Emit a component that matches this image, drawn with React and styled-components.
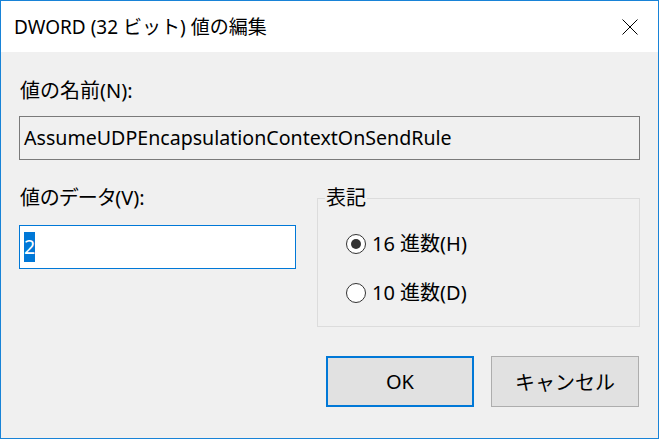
import React, { useState } from "react";
import styled, { createGlobalStyle } from "styled-components";

const GlobalStyle = createGlobalStyle`
  html, body {
    margin: 0;
    padding: 0;
    background: #ffffff;
  }
  * {
    box-sizing: border-box;
  }
`;

const Window = styled.div`
  width: 659px;
  height: 439px;
  border: 1px solid #1883d7;
  background-color: #f0f0f0;
  font-family: "Noto Sans", "Noto Sans CJK JP", sans-serif;
  font-size: 20px;
  color: #000000;
  display: flex;
  flex-direction: column;
`;

const TitleBar = styled.div`
  height: 51px;
  flex: none;
  background-color: #ffffff;
  display: flex;
  align-items: center;
  justify-content: space-between;
  padding: 0 20px 0 13px;
`;

const Title = styled.span`
  font-size: 19px;
  line-height: 24px;
`;

const CloseButton = styled.button`
  width: 16px;
  height: 16px;
  padding: 0;
  border: none;
  background: none;
  display: flex;
  cursor: pointer;
`;

const Body = styled.div`
  flex: 1;
  padding: 27px 18px 0 18px;
  display: flex;
  flex-direction: column;
`;

const Label = styled.div`
  line-height: 24px;
  padding-left: 1px;
  margin-bottom: ${({ $gap }) => $gap}px;
  font-feature-settings: ${({ $proportional }) => ($proportional ? '"palt"' : "normal")};
`;

const TextBox = styled.div`
  height: 44px;
  border: 1px solid ${({ $focused }) => ($focused ? "#0078d7" : "#7a7a7a")};
  background-color: ${({ $readOnly }) => ($readOnly ? "#f0f0f0" : "#ffffff")};
  display: flex;
  align-items: center;
  padding: 0 4px;
  font-size: 19.6px;
  line-height: 24px;
`;

const Selected = styled.span`
  background-color: #0078d7;
  color: #ffffff;
  padding: 3px 0;
  line-height: 24px;
`;

const Row = styled.div`
  display: flex;
  gap: 21px;
  margin-top: 26px;
`;

const LeftColumn = styled.div`
  width: 277px;
  display: flex;
  flex-direction: column;
`;

const GroupBox = styled.fieldset`
  flex: 1;
  margin: 0;
  height: 141px;
  border: 1px solid #dcdcdc;
  padding: 0 0 0 28px;
  display: flex;
  flex-direction: column;
  gap: 25px;
`;

const Legend = styled.legend`
  padding: 0 1px;
  margin-left: -21px;
  line-height: 24px;
`;

const RadioRow = styled.label`
  display: flex;
  align-items: center;
  gap: 6px;
  line-height: 24px;
  cursor: pointer;
  margin-top: ${({ $first }) => ($first ? "22px" : "0")};
`;

const RadioCircle = styled.span`
  width: 20px;
  height: 20px;
  border-radius: 50%;
  border: 1px solid #333333;
  background-color: #ffffff;
  display: flex;
  align-items: center;
  justify-content: center;
  flex: none;

  &::after {
    content: "";
    width: 10px;
    height: 10px;
    border-radius: 50%;
    background-color: ${({ $checked }) => ($checked ? "#333333" : "transparent")};
  }
`;

const ButtonRow = styled.div`
  display: flex;
  justify-content: flex-end;
  gap: 17px;
  margin-top: 29px;
  padding-right: 1px;
`;

const Button = styled.button`
  width: 148px;
  height: 51px;
  font-family: inherit;
  font-size: 20px;
  color: #000000;
  background-color: #e1e1e1;
  border: ${({ $primary }) => ($primary ? "2px solid #0078d7" : "1px solid #adadad")};
  cursor: pointer;
`;

const CloseIcon = () => (
  <svg width="16" height="16" viewBox="0 0 16 16">
    <path d="M0.5 0.5 L15.5 15.5 M15.5 0.5 L0.5 15.5" stroke="#000" strokeWidth="1" />
  </svg>
);

const App = () => {
  const [base, setBase] = useState("hex");

  return (
    <>
      <GlobalStyle />
      <Window>
        <TitleBar>
          <Title>DWORD (32 ビット) 値の編集</Title>
          <CloseButton>
            <CloseIcon />
          </CloseButton>
        </TitleBar>
        <Body>
          <Label $gap={13}>値の名前(N):</Label>
          <TextBox $readOnly>AssumeUDPEncapsulationContextOnSendRule</TextBox>
          <Row>
            <LeftColumn>
              <Label $gap={15} $proportional>
                値のデータ(V):
              </Label>
              <TextBox $focused>
                <Selected>2</Selected>
              </TextBox>
            </LeftColumn>
            <GroupBox>
              <Legend>表記</Legend>
              <RadioRow $first onClick={() => setBase("hex")}>
                <RadioCircle $checked={base === "hex"} />
                16 進数(H)
              </RadioRow>
              <RadioRow onClick={() => setBase("dec")}>
                <RadioCircle $checked={base === "dec"} />
                10 進数(D)
              </RadioRow>
            </GroupBox>
          </Row>
          <ButtonRow>
            <Button $primary>OK</Button>
            <Button>キャンセル</Button>
          </ButtonRow>
        </Body>
      </Window>
    </>
  );
};

export default App;
